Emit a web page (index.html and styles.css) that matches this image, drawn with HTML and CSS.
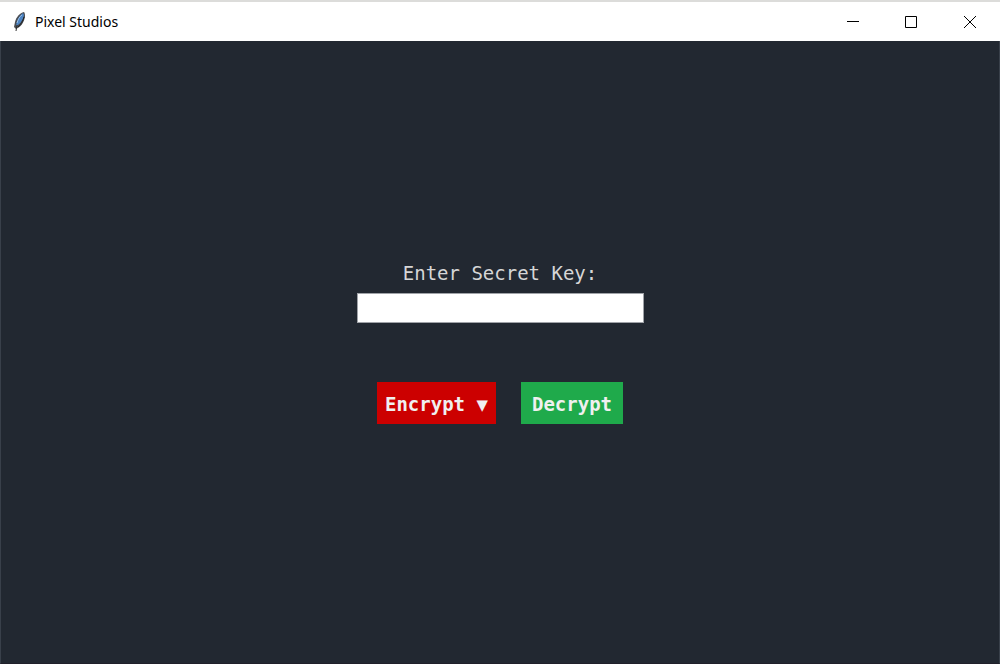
FILE: index.html
```
<!DOCTYPE html>
<html lang="en">
<head>
<meta charset="utf-8">
<meta name="viewport" content="width=device-width, initial-scale=1">
<title>Pixel Studios</title>
<link rel="stylesheet" href="styles.css">
</head>
<body>
<div class="window">
  <header class="titlebar">
    <svg class="feather" width="14" height="20" viewBox="0 0 14 20" aria-hidden="true">
      <path d="M11 0 C7 1 3 5 2 10 L1 15 L3 17 C8 15 11 10 12 5 C12 3 12 1 11 0Z" fill="#4a4d52"/>
      <path d="M10 1 C6 4 4 8 3 14 C8 12 10 7 11 3Z" fill="#4c84c4"/>
      <path d="M9 3 C6 5 5 8 4 11" fill="none" stroke="#9cc0e6" stroke-width="1"/>
      <path d="M11 5 C10 9 8 12 5 15" fill="none" stroke="#202225" stroke-width="1"/>
      <path d="M4 13L3 19" fill="none" stroke="#303030" stroke-width="1"/>
    </svg>
    <h1 class="title">Pixel Studios</h1>
    <div class="controls">
      <button class="control" type="button" aria-label="Minimize">
        <svg width="12" height="12" viewBox="0 0 12 12"><path d="M0 5.5H12" stroke="#000"/></svg>
      </button>
      <button class="control" type="button" aria-label="Maximize">
        <svg width="12" height="12" viewBox="0 0 12 12"><path d="M.5 .5H11.5V11.5H.5Z" fill="none" stroke="#000"/></svg>
      </button>
      <button class="control" type="button" aria-label="Close">
        <svg width="12" height="12" viewBox="0 0 12 12"><path d="M0 0L12 12M12 0L0 12" stroke="#000"/></svg>
      </button>
    </div>
  </header>
  <main class="content">
    <form class="form">
      <label class="label" for="secret-key">Enter Secret Key:</label>
      <input class="key" id="secret-key" type="text">
      <div class="actions">
        <button class="action encrypt" type="button" aria-haspopup="menu">Encrypt ▼</button>
        <button class="action decrypt" type="button">Decrypt</button>
      </div>
    </form>
  </main>
</div>
</body>
</html>
```
FILE: styles.css
```
* {
  box-sizing: border-box;
}

body {
  margin: 0;
}

.window {
  display: flex;
  flex-direction: column;
  min-height: 100vh;
  background: #222831;
}

.titlebar {
  display: flex;
  align-items: center;
  height: 41px;
  padding-left: 13px;
  background: #fff;
  border-top: 2px solid #dcdcda;
}

.feather {
  flex: none;
}

.title {
  margin: 0 0 0 8px;
  font: 400 14px/20px "Noto Sans", "Open Sans", sans-serif;
  color: #000;
}

.controls {
  display: flex;
  align-self: stretch;
  margin-left: auto;
}

.control {
  display: flex;
  align-items: center;
  justify-content: center;
  width: 58px;
  padding: 0;
  border: 0;
  background: none;
}

.control:last-child {
  width: 60px;
}

.content {
  display: flex;
  flex: 1;
  align-items: center;
  justify-content: center;
  padding-bottom: 20px;
  border: 1px solid #39404a;
  border-top: 0;
  border-bottom-color: #20202a;
}

.form {
  display: flex;
  flex-direction: column;
  align-items: center;
}

.label {
  margin-bottom: 7px;
  font: 400 19px/26px "DejaVu Sans Mono", monospace;
  color: #d6d6d6;
}

.key {
  width: 287px;
  height: 30px;
  padding: 2px 4px;
  border: 1px solid #a0a3a8;
  border-radius: 0;
  background: #fff;
  font: 400 19px/24px "DejaVu Sans Mono", monospace;
}

.actions {
  display: flex;
  gap: 25px;
  margin-top: 59px;
}

.action {
  height: 42px;
  padding: 2px 8px 0;
  border: 0;
  font: 700 19px/24px "DejaVu Sans Mono", monospace;
  color: #f0f0f0;
}

.encrypt {
  background: #cc0000;
}

.decrypt {
  padding: 2px 11px 0;
  background: #1faa4b;
}
```
